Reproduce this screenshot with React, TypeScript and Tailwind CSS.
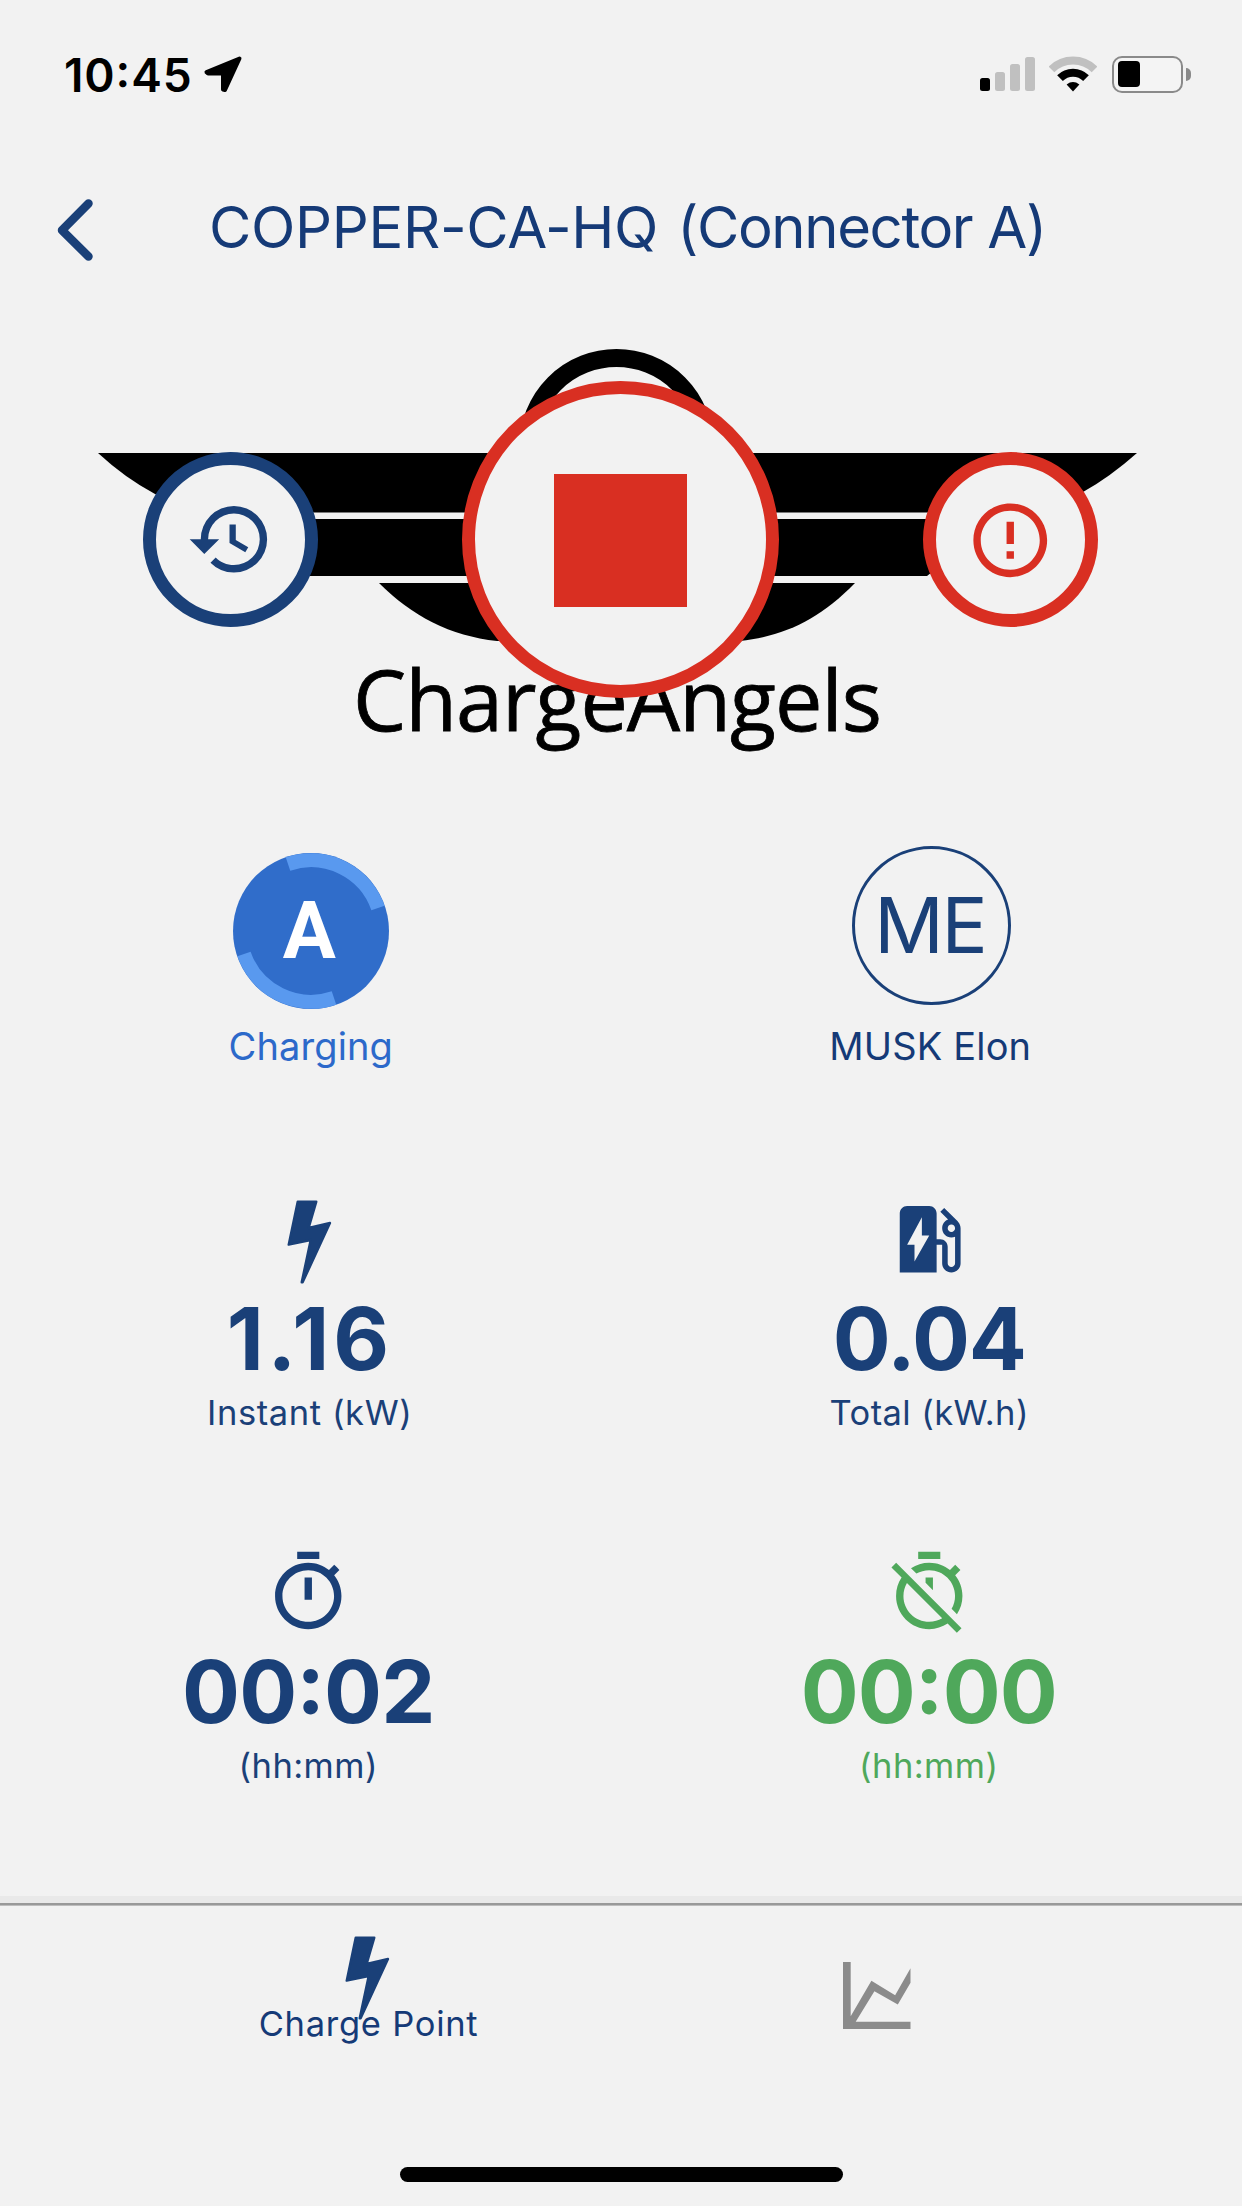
import type { ReactNode } from 'react';

function StatusBar() {
  return (
    <div className="flex h-[148px] items-center pl-[64px] pr-[51px] text-black">
      <span className="w-[129px] whitespace-nowrap pt-[1px] text-[46px] font-semibold leading-none tracking-[0.9px] [font-feature-settings:'case']">10:45</span>
      <svg className="ml-[10px] h-[38px] w-[40px]" viewBox="0 0 40 38" fill="currentColor" stroke="currentColor" strokeWidth="4" strokeLinejoin="round">
        <path d="M36.5 3.5 3.5 17.2 5 18.4H20V34.5L22 35Z" />
      </svg>
      <div className="flex-1" />
      <div className="flex h-[34px] items-end gap-[4.5px]">
        <div className="h-[13px] w-[10.5px] rounded-[2.5px] bg-black" />
        <div className="h-[19px] w-[10.5px] rounded-[2.5px] bg-[#c0c0c0]" />
        <div className="h-[27px] w-[10.5px] rounded-[2.5px] bg-[#c0c0c0]" />
        <div className="h-[34px] w-[10.5px] rounded-[2.5px] bg-[#c0c0c0]" />
      </div>
      <svg className="ml-[14px] h-[36px] w-[48px]" viewBox="0 0 48 36" fill="none" strokeWidth="8">
        <path d="M2.5 13.4A30.5 30.5 0 0 1 45.500 13.4" stroke="#c0c0c0" />
        <path d="M11 22.100A18.300 18.300 0 0 1 37 22.100" stroke="#000" />
        <path d="M24 35.500 17.600 28.500Q24 23.600 30.400 28.500Z" fill="#000" />
      </svg>
      <div className="ml-[15px] flex h-[37px] w-[71px] items-center rounded-[10px] border-[2.5px] border-[#8a8a8a] bg-[#f4f4f4] pl-[3.500px]">
        <div className="h-[26px] w-[22px] rounded-[4px] bg-black" />
      </div>
      <div className="ml-[3px] h-[13px] w-[5px] rounded-r-full bg-[#8a8a8a]" />
    </div>
  );
}

function Header() {
  return (
    <header className="flex h-[156px] items-center pl-[55px] text-[#153a77]">
      <svg className="mt-[8px] h-[64px] w-[40px]" viewBox="0 0 40 64" fill="none" stroke="#1a4078" strokeWidth="8.500" strokeLinecap="round" strokeLinejoin="round">
        <path d="M33.500 5.500 7 32.200 33.500 58.500" />
      </svg>
      <h1 className="ml-[114px] mt-[1px] whitespace-nowrap text-[58px] leading-none tracking-[-0.330px]">
        COPPER-CA-HQ <span className="ml-[3px] tracking-[-1.360px]">(Connector A)</span>
      </h1>
    </header>
  );
}

function Logo() {
  return (
    <svg className="absolute inset-0 h-full w-full" viewBox="0 304 1242 471">
      <circle cx="616.500" cy="446" r="88" fill="none" stroke="#000" strokeWidth="18" />
      <path d="M98 453H1137Q1110 477 1083 492Q1050 510 1000 512.500H240Q190 510 155 494Q125 478 98 453Z" />
      <path d="M240 519H1000L927 576H300Z" />
      <path d="M379 583H855C820 619 785 636 740 641H497C450 636 412 616 379 583Z" />
      <text x="353" y="730.500" fontSize="84.500" textLength="529" stroke="#000" strokeWidth="0.800" className="font-['Open_Sans']">ChargeAngels</text>
    </svg>
  );
}

function Hero() {
  return (
    <section className="relative h-[471px]">
      <Logo />
      <div className="relative flex h-full items-center justify-between pl-[143px] pr-[144px]">
        <button className="flex size-[175px] items-center justify-center rounded-full border-[13px] border-[#1a4078] bg-[#f2f2f2]">
          <svg className="size-[88.500px] shrink-0" viewBox="0 0 24 24" fill="#1a4078">
            <path d="M13.500 8H11.800v5l4.280 2.540.8-1.350-3.380-2.020V8zM13 3a9 9 0 0 0-9 9H1l3.960 4.030L9 12H6a7 7 0 1 1 7 7c-1.930 0-3.680-.79-4.940-2.060l-1.420 1.420A8.900 8.900 0 0 0 13 21a9 9 0 0 0 0-18z" />
          </svg>
        </button>
        <button className="flex size-[317px] items-center justify-center rounded-full border-[13px] border-[#d92f22] bg-[#f2f2f2]">
          <span className="mt-[2px] size-[133px] bg-[#d92f22]" />
        </button>
        <button className="flex size-[175px] items-center justify-center rounded-full border-[13px] border-[#d92f22] bg-[#f2f2f2]">
          <svg className="mt-[2px] size-[88.500px] shrink-0" viewBox="0 0 24 24" fill="#d92f22">
            <path d="M11 15h2v2h-2v-2zm0-8h2v6h-2V7zm.99-5C6.470 2 2 6.480 2 12s4.470 10 9.990 10C17.520 22 22 17.520 22 12S17.520 2 11.990 2zM12 20c-4.420 0-8-3.580-8-8s3.580-8 8-8 8 3.580 8 8-3.580 8-8 8z" />
          </svg>
        </button>
      </div>
    </section>
  );
}

function Bolt() {
  return (
    <svg className="h-[84px] w-[45px]" viewBox="0 0 135 252" fill="#1a4078" stroke="#1a4078" strokeWidth="7" strokeLinejoin="round">
      <path d="M32 5H88L65 84 129 69 47 247H44L71 120 5 134Z" />
    </svg>
  );
}

function Glyph({ d, fill }: { d: string; fill: string }) {
  return (
    <svg className="size-[88.500px]" viewBox="0 0 24 24" fill={fill}>
      <path d={d} />
    </svg>
  );
}

const EV_STATION =
  'M19.770 7.230l.01-.01-3.720-3.720L15 4.560l2.110 2.110c-.94.36-1.610 1.260-1.610 2.330 0 1.380 1.120 2.500 2.500 2.500.36 0 .69-.08 1-.21v7.210c0 .55-.45 1-1 1s-1-.45-1-1V14c0-1.100-.9-2-2-2h-1V5c0-1.100-.9-2-2-2H6c-1.100 0-2 .9-2 2v16h10v-7.500h1.500v5c0 1.380 1.120 2.500 2.500 2.500s2.500-1.120 2.500-2.500V9c0-.69-.28-1.320-.73-1.770zM18 10c-.55 0-1-.45-1-1s.45-1 1-1 1 .45 1 1-.45 1-1 1zM8 18v-4.500H6L10 6v5h2l-4 7z';
const TIMER =
  'M15 1H9v2h6V1zm-4 13h2V8h-2v6zm8.030-6.610l1.420-1.420c-.43-.51-.9-.99-1.410-1.410l-1.420 1.420C16.070 4.740 14.120 4 12 4c-4.970 0-9 4.030-9 9s4.020 9 9 9 9-4.030 9-9c0-2.120-.74-4.070-1.970-5.610zM12 20c-3.870 0-7-3.130-7-7s3.130-7 7-7 7 3.130 7 7-3.130 7-7 7z';
const TIMER_OFF =
  'M19.040 4.550l-1.420 1.420C16.070 4.740 14.120 4 12 4c-1.830 0-3.530.55-4.950 1.480l1.460 1.460C9.530 6.350 10.730 6 12 6c3.870 0 7 3.130 7 7 0 1.270-.35 2.470-.94 3.490l1.450 1.450C20.450 16.530 21 14.830 21 13c0-2.120-.74-4.070-1.970-5.610l1.420-1.420-1.410-1.420zM15 1H9v2h6V1zm-4 8.440l2 2V8h-2v1.440zM3.020 4L1.750 5.270 4.500 8.030C3.550 9.450 3 11.160 3 13c0 4.970 4.020 9 9 9 1.840 0 3.550-.55 4.980-1.500l2.500 2.500 1.270-1.270-7.710-7.710L3.020 4zM12 20c-3.870 0-7-3.130-7-7 0-1.280.35-2.480.95-3.520l9.560 9.560c-1.030.61-2.230.96-3.510.96z';

function Stat({ icon, value, label, valueClass, labelClass, color = 'text-[#1a4078]' }: { icon: ReactNode; value: string; label: string; valueClass: string; labelClass: string; color?: string }) {
  return (
    <div className={`flex flex-col items-center ${color}`}>
      <div className="flex h-[89px] items-center">{icon}</div>
      <div className={`text-[86px] font-bold leading-[110px] ${valueClass}`}>{value}</div>
      <div className={`-mt-[1px] text-[34.500px] leading-[39px] ${labelClass}`}>{label}</div>
    </div>
  );
}

function ChargingBadge() {
  return (
    <div className="relative ml-[2px] flex size-[156px] items-center justify-center rounded-full bg-[#306dca]">
      <svg className="absolute inset-0 size-full" viewBox="-78 -78 156 156" fill="none" stroke="#5999ef" strokeWidth="14">
        <path d="M-23 -67A71 71 0 0 1 67 -23M23 67A71 71 0 0 1 -67 23" />
      </svg>
      <span className="relative mr-[3px] font-[Roboto] text-[79px] font-bold leading-none text-white">A</span>
    </div>
  );
}

function TabBar() {
  return (
    <nav>
      <div className="h-[7px] bg-[#e9e9e9]" />
      <div className="h-[3px] border-b border-[#bdbdbd] bg-[#999]" />
      <div className="grid h-[261px] grid-cols-2 pl-[112px] pr-[110px]">
        <div className="flex flex-col items-center pt-[30px]">
          <Bolt />
          <span className="relative -mt-[16px] ml-[3px] text-[34.500px] leading-[39px] tracking-[0.730px] text-[#153a77]">Charge Point</span>
        </div>
        <div className="flex flex-col items-center pt-[56px]">
          <svg className="h-[67px] w-[67.500px]" viewBox="0 0 202 200" preserveAspectRatio="none" fill="#8b8b8b">
            <path d="M0 0H23V162L85 56 156 99 202 19V62L164 127 94 87 38 178H202V200H0Z" />
          </svg>
        </div>
      </div>
      <div className="flex h-[39px] justify-center">
        <div className="h-[15px] w-[443px] rounded-full bg-black" />
      </div>
    </nav>
  );
}

export default function App() {
  return (
    <div className="h-[2208px] w-[1242px] overflow-hidden bg-white font-[Inter,sans-serif]">
      <div className="flex h-[2206px] flex-col bg-[#f2f2f2]">
        <StatusBar />
        <Header />
        <Hero />
        <main className="grid w-[1239px] flex-1 grid-cols-2 content-start pt-[78px]">
          <div className="flex h-[230px] flex-col items-center">
            <ChargingBadge />
            <div className="ml-[2px] text-[38px] leading-[74px] tracking-[0.100px] text-[#2c69ca]">Charging</div>
          </div>
          <div className="flex h-[230px] flex-col items-center text-[#153a77]">
            <div className="-mt-[7px] mb-[4px] ml-[4px] flex size-[159px] items-center justify-center rounded-full border-[3px] border-[#1a4078]">
              <span className="mr-[3px] text-[77px] leading-none tracking-[-2.500px] text-[#1a4078]">ME</span>
            </div>
            <div className="ml-[2px] text-[38px] leading-[74px] tracking-[0.150px]">MUSK Elon</div>
          </div>
          <div className="pt-[112px]">
            <Stat icon={<div className="mt-[5px]"><Bolt /></div>} value="1.16" label="Instant (kW)" valueClass="tracking-[3.800px]" labelClass="tracking-[0.600px]" />
          </div>
          <div className="pt-[112px]">
            <Stat icon={<Glyph d={EV_STATION} fill="#1a4078" />} value="0.04" label="Total (kW.h)" valueClass="tracking-[-1.200px]" labelClass="tracking-[0.420px]" />
          </div>
          <div className="pr-[3px] pt-[116px]">
            <Stat icon={<Glyph d={TIMER} fill="#1a4078" />} value="00:02" label="(hh:mm)" valueClass="tracking-[-0.900px] [font-feature-settings:'case']" labelClass="tracking-[0.450px]" />
          </div>
          <div className="pr-[1px] pt-[116px]">
            <Stat icon={<Glyph d={TIMER_OFF} fill="#4fa85b" />} value="00:00" label="(hh:mm)" valueClass="tracking-[-0.900px] [font-feature-settings:'case']" labelClass="tracking-[0.450px]" color="text-[#4fa85b]" />
          </div>
        </main>
        <TabBar />
      </div>
    </div>
  );
}
